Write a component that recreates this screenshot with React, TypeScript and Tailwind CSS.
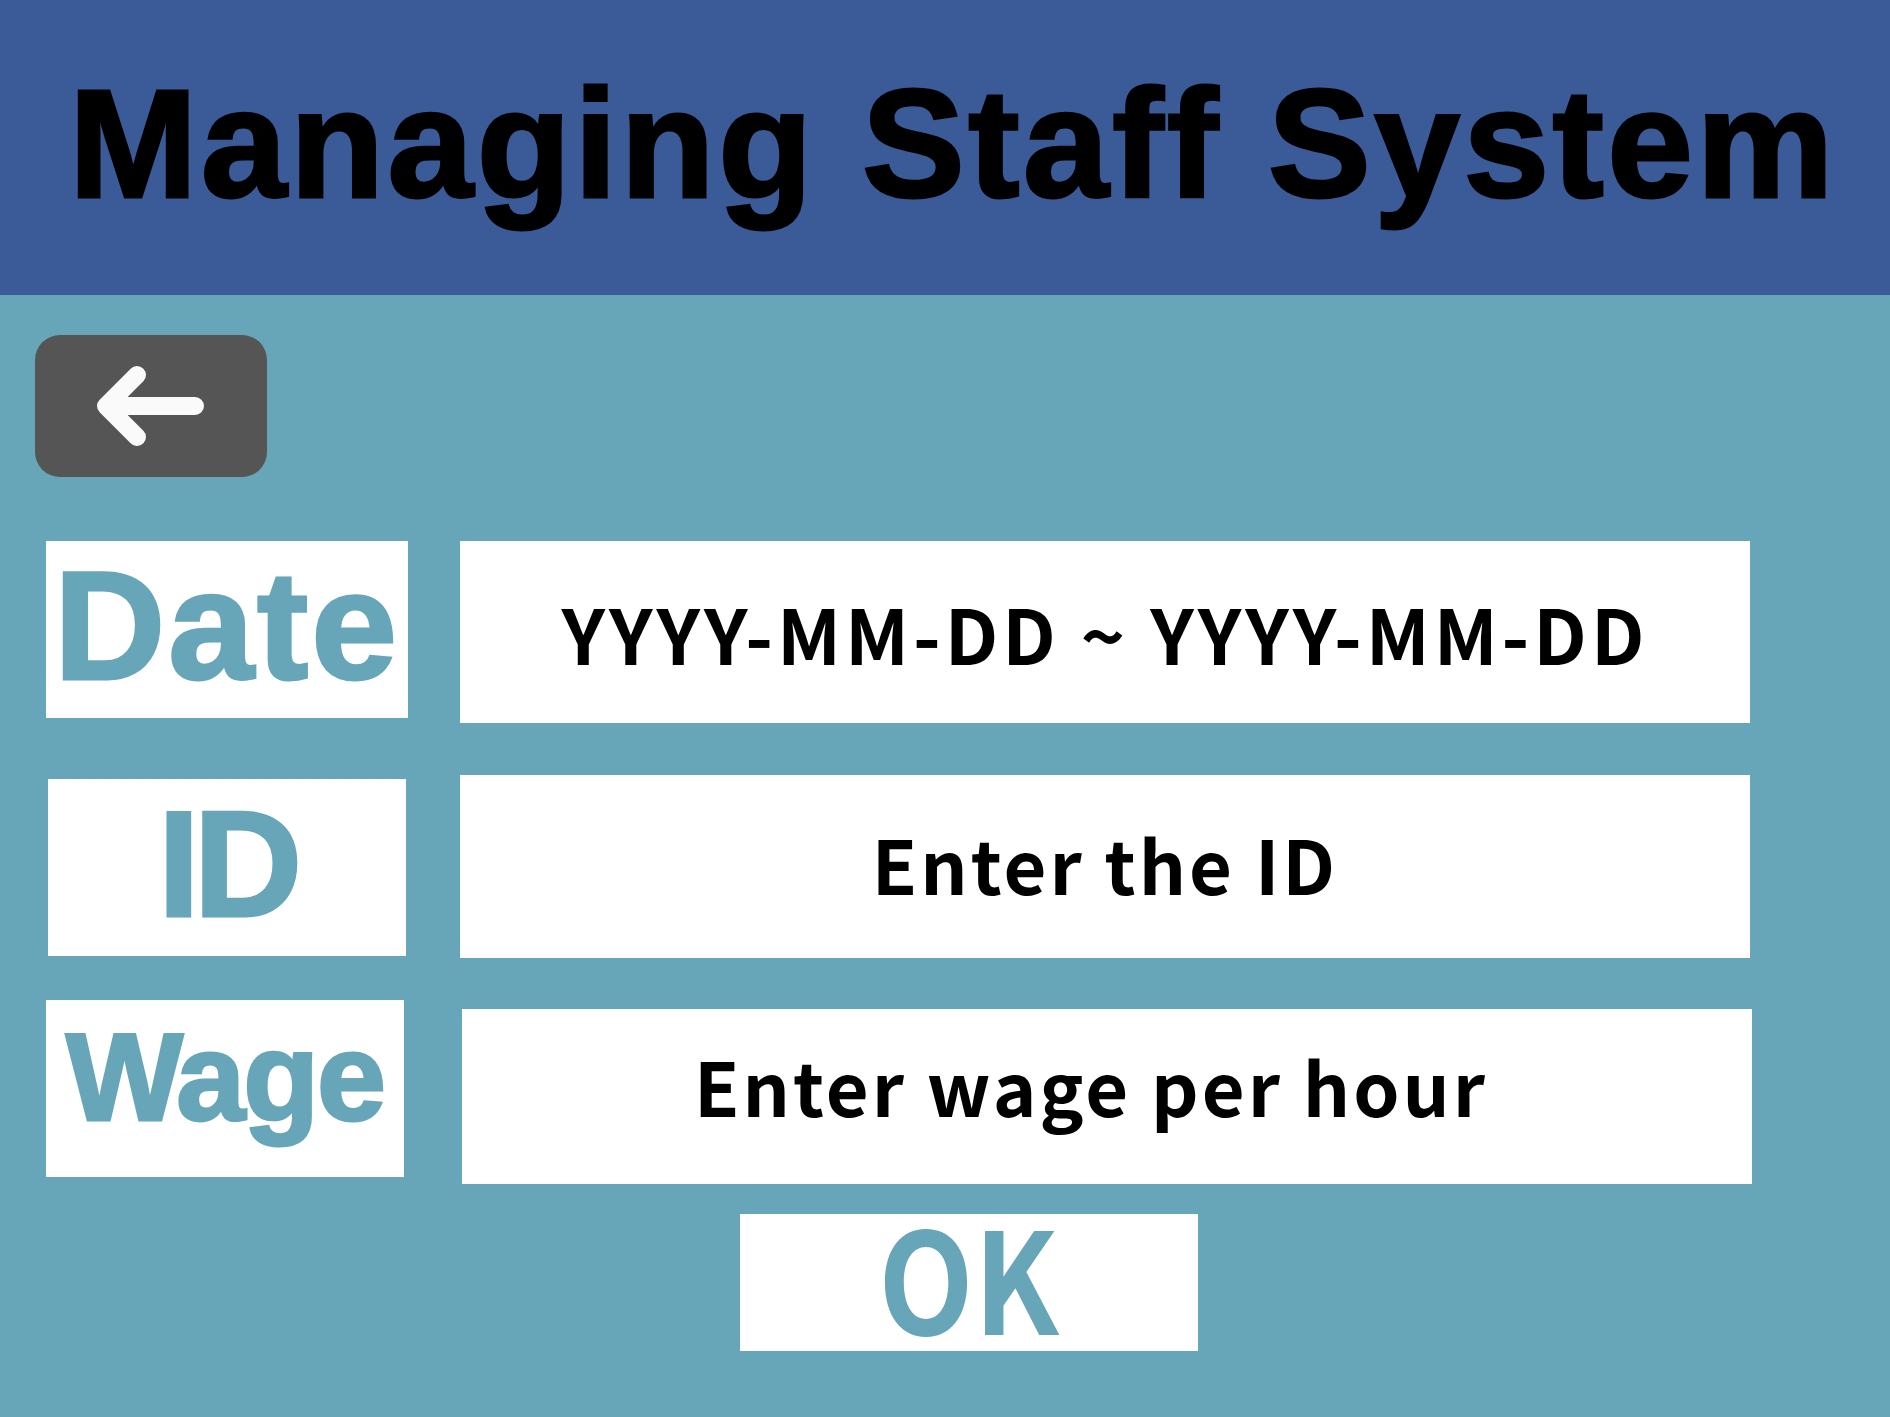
// label/heading face and the input face
const heavy = "font-['Liberation_Sans',Arial,sans-serif] font-bold leading-none";
const field = "font-['Noto_Sans_CJK_KR','Noto_Sans',sans-serif] font-bold leading-none";

export default function App() {
  return (
    <div className="min-h-screen w-[1890px] bg-[#67a6b8] flex flex-col">
      <header className="h-[295px] bg-[#3b5b98] flex items-center justify-center pb-[8px] pl-[16px]">
        <h1 className={`${heavy} text-[154px] tracking-[3.5px] text-black whitespace-nowrap [-webkit-text-stroke:3px_black]`}>
          Managing Staff System
        </h1>
      </header>

      <button className="mt-[40px] ml-[35px] w-[232px] h-[142px] rounded-[25px] bg-[#555555] flex">
        <svg width="232" height="142" viewBox="0 0 232 142" fill="none">
          <path d="M160 71H71M102 40L71 71L102 102" stroke="#fafafa" strokeWidth="18" strokeLinecap="round" strokeLinejoin="round" />
        </svg>
      </button>

      {/* Date */}
      <div className="mt-[64px] flex items-start">
        <div className={`${heavy} ml-[46px] w-[362px] h-[177px] pb-[8px] bg-white flex items-center justify-center text-[154px] tracking-[3px] text-[#67a6b8] [-webkit-text-stroke:3px_#67a6b8]`}>
          Date
        </div>
        <div className={`${field} ml-[52px] w-[1290px] h-[182px] bg-white flex items-center justify-center text-[75px] tracking-[4px] text-black whitespace-nowrap`}>
          YYYY-MM-DD ~ YYYY-MM-DD
        </div>
      </div>

      {/* ID */}
      <div className="mt-[52px] flex items-start">
        <div className={`${heavy} mt-[4px] ml-[48px] w-[358px] h-[177px] pb-[8px] bg-white flex items-center justify-center text-[150px] tracking-[-6px] text-[#67a6b8] [-webkit-text-stroke:3px_#67a6b8]`}>
          ID
        </div>
        <div className={`${field} ml-[54px] w-[1290px] h-[183px] pb-[8px] bg-white flex items-center justify-center text-[74px] tracking-[3px] text-black whitespace-nowrap`}>
          Enter the ID
        </div>
      </div>

      {/* Wage */}
      <div className="mt-[42px] flex items-start">
        <div className={`${heavy} ml-[46px] w-[358px] h-[177px] pb-[24px] bg-white flex items-center justify-center text-[124px] tracking-[-2px] text-[#67a6b8] [-webkit-text-stroke:3px_#67a6b8]`}>
          Wage
        </div>
        <div className={`${field} mt-[9px] ml-[58px] w-[1290px] h-[175px] pb-[24px] pr-[32px] bg-white flex items-center justify-center text-[74px] tracking-[3px] text-black whitespace-nowrap`}>
          Enter wage per hour
        </div>
      </div>

      <button className={`${field} mt-[30px] ml-[740px] w-[458px] h-[137px] pb-[18px] bg-white flex items-center justify-center text-[141px] text-[#67a6b8]`}>
        <span className="scale-x-[0.88]">OK</span>
      </button>
    </div>
  );
}
